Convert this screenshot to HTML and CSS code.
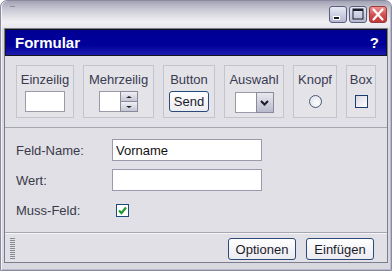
FILE: index.html
```html
<!DOCTYPE html>
<html lang="de">
<head>
    <meta charset="UTF-8">
    <title>Formular</title>
    <link rel="stylesheet" href="styles.css">
</head>
<body>

    <!-- Fenster -->
    <div class="window">

        <!-- Titelleiste -->
        <div class="titlebar">
            <span class="sysmenu"></span>
            <div class="controls">
                <span class="ctl ctl-min">
                    <svg width="16" height="15" viewBox="0 0 16 15"><rect x="3.5" y="9.5" width="6" height="3" fill="#1c1c2c" stroke="#ffffff"/></svg>
                </span>
                <span class="ctl ctl-max">
                    <svg width="16" height="15" viewBox="0 0 16 15"><rect x="3" y="2" width="10" height="10" fill="none" stroke="#1c1c2c" stroke-width="1"/><rect x="3" y="2" width="10" height="2" fill="#1c1c2c"/></svg>
                </span>
                <span class="ctl ctl-close">
                    <svg width="16" height="15" viewBox="0 0 16 15"><path d="M3.5 2.5 L12.5 12.5 M12.5 2.5 L3.5 12.5" stroke="#ffffff" stroke-width="2.2" stroke-linecap="round"/></svg>
                </span>
            </div>
        </div>

        <!-- Inhalt -->
        <div class="panel">
            <div class="header">
                <span class="header-title">Formular</span>
                <span class="header-help">?</span>
            </div>

            <!-- Werkzeugleiste -->
            <div class="toolbar">
                <div class="tool tool-text">
                    <span class="tool-label">Einzeilig</span>
                    <span class="field"></span>
                </div>
                <div class="tool tool-area">
                    <span class="tool-label">Mehrzeilig</span>
                    <span class="spinner">
                        <span class="spinner-field"></span>
                        <span class="spinner-btns">
                            <span class="spin-btn"><i class="arrow-up"></i></span>
                            <span class="spin-btn"><i class="arrow-down"></i></span>
                        </span>
                    </span>
                </div>
                <div class="tool tool-button">
                    <span class="tool-label">Button</span>
                    <span class="send-btn">Send</span>
                </div>
                <div class="tool tool-select">
                    <span class="tool-label">Auswahl</span>
                    <span class="combo">
                        <span class="combo-field"></span>
                        <span class="combo-btn">
                            <svg width="9" height="6" viewBox="0 0 9 6"><path d="M1 1 L4.5 4.5 L8 1" fill="none" stroke="#1a1a2a" stroke-width="2"/></svg>
                        </span>
                    </span>
                </div>
                <div class="tool tool-radio">
                    <span class="tool-label">Knopf</span>
                    <span class="radio"></span>
                </div>
                <div class="tool tool-check">
                    <span class="tool-label">Box</span>
                    <span class="checkbox"></span>
                </div>
            </div>

            <!-- Formularfelder -->
            <div class="form">
                <div class="row">
                    <label class="row-label">Feld-Name:</label>
                    <input class="row-input" type="text" value="Vorname">
                </div>
                <div class="row">
                    <label class="row-label">Wert:</label>
                    <input class="row-input" type="text" value="">
                </div>
                <div class="row">
                    <label class="row-label">Muss-Feld:</label>
                    <span class="check-on">
                        <svg width="11" height="11" viewBox="0 0 11 11"><path d="M2 5.5 L4.5 8 L9 2.5" fill="none" stroke="#1f9a2a" stroke-width="2.2"/></svg>
                    </span>
                </div>
            </div>

            <!-- Fußleiste -->
            <div class="footer">
                <span class="grip"></span>
                <div class="footer-buttons">
                    <button class="btn">Optionen</button>
                    <button class="btn">Einfügen</button>
                </div>
            </div>
        </div>
    </div>

</body>
</html>
```

FILE: styles.css
```css
/* Grundstil */
body {
    margin: 0;
    padding: 0;
    background-color: #ffffff;
    font-family: 'Liberation Sans', Arial, sans-serif;
    font-size: 13px;
    color: #333344;
}

/* Fenster */
.window {
    width: 392px;
    height: 271px;
    box-sizing: border-box;
    border: 1px solid #8a8aa0;
    border-radius: 7px 7px 0 0;
    padding: 0 3px 7px;
    background: linear-gradient(#a2a2b4 0, #c8c8d4 8px, #f0f0f4 21px, #e6e6ec 27px, #d8d8e0 28px);
    box-shadow: inset 1px 0 #f4f4f8, inset -1px 0 #b8b8c6, inset 0 -1px #b8b8c6;
}

.titlebar {
    height: 27px;
    position: relative;
    display: flex;
    justify-content: flex-end;
    padding: 5px 1px 0 0;
    box-sizing: border-box;
}

.sysmenu {
    position: absolute;
    left: 6px;
    top: 5px;
    width: 5px;
    height: 1px;
    background-color: #8c8c9c;
}

.controls {
    display: flex;
    gap: 2px;
}

.ctl {
    width: 18px;
    height: 17px;
    box-sizing: border-box;
    border: 1px solid #5c5c7c;
    border-radius: 3px;
    background: linear-gradient(#e8eaf4, #b4b8d0);
    display: flex;
    align-items: center;
    justify-content: center;
}

.ctl-close {
    border-color: #9a3a3a;
    background: linear-gradient(#f09090, #d04848 60%, #c03838);
}

/* Innerer Bereich */
.panel {
    border: 1px solid #7c7c8c;
    background-color: #e0e0e6;
}

.header {
    height: 27px;
    box-sizing: border-box;
    border: 1px solid #14141e;
    background: linear-gradient(#000094, #00009a 60%, #1c1cae);
    display: flex;
    align-items: center;
    justify-content: space-between;
    padding: 0 7px 0 9px;
    color: #ffffff;
    font-size: 15px;
    font-weight: bold;
}

/* Werkzeugleiste */
.toolbar {
    display: flex;
    gap: 9px;
    padding: 9px 11px;
    border-bottom: 1px solid #a6a6b0;
}

.tool {
    height: 53px;
    box-sizing: border-box;
    border: 1px solid #c4c4cc;
    background-color: #e3e3e8;
    padding-top: 6px;
    display: flex;
    flex-direction: column;
    align-items: center;
}

.tool-text { width: 58px; }
.tool-area { width: 71px; }
.tool-button { width: 52px; }
.tool-select { width: 60px; }
.tool-radio { width: 44px; }
.tool-check { width: 30px; }

.tool-label {
    line-height: 16px;
    color: #3a3a50;
    margin-bottom: 3px;
}

.field {
    width: 40px;
    height: 21px;
    box-sizing: border-box;
    border: 1px solid #9a9aaa;
    background-color: #ffffff;
}

/* Spinner */
.spinner {
    display: flex;
    height: 21px;
}

.spinner-field {
    width: 21px;
    box-sizing: border-box;
    border: 1px solid #9a9aaa;
    border-right: none;
    background-color: #ffffff;
}

.spinner-btns {
    display: flex;
    flex-direction: column;
    width: 18px;
}

.spin-btn {
    flex: 1;
    box-sizing: border-box;
    border: 1px solid #8a8a9c;
    background: linear-gradient(#f0f0f4, #c4c6d4);
    display: flex;
    align-items: center;
    justify-content: center;
}

.spin-btn + .spin-btn {
    border-top: none;
}

.arrow-up,
.arrow-down {
    width: 0;
    height: 0;
    border-left: 3px solid transparent;
    border-right: 3px solid transparent;
}

.arrow-up { border-bottom: 2px solid #20202c; }
.arrow-down { border-top: 2px solid #20202c; }

/* Send-Knopf */
.send-btn {
    width: 40px;
    height: 21px;
    box-sizing: border-box;
    border: 1px solid #2a4a7c;
    border-radius: 3px;
    background: linear-gradient(#ffffff, #ececf2);
    color: #1a1a2a;
    text-align: center;
    line-height: 19px;
}

/* Auswahl */
.combo {
    display: flex;
    height: 21px;
    margin-top: 1px;
}

.combo-field {
    width: 21px;
    box-sizing: border-box;
    border: 1px solid #9a9aaa;
    border-right: none;
    background-color: #ffffff;
}

.combo-btn {
    width: 18px;
    box-sizing: border-box;
    border: 1px solid #8a8a9c;
    background: linear-gradient(#e8e8f0, #b8bacc);
    display: flex;
    align-items: center;
    justify-content: center;
}

.radio {
    width: 13px;
    height: 13px;
    box-sizing: border-box;
    border: 1px solid #4a5a78;
    border-radius: 50%;
    background: radial-gradient(circle at 60% 60%, #ffffff, #d6dae4);
    margin-top: 4px;
}

.checkbox {
    width: 13px;
    height: 13px;
    box-sizing: border-box;
    border: 1px solid #1c3c70;
    background: linear-gradient(135deg, #d8d8e2, #ffffff);
    margin-top: 4px;
}

/* Formular */
.form {
    display: flex;
    flex-direction: column;
    gap: 8px;
    padding: 11px 11px;
}

.row {
    display: flex;
    align-items: center;
    height: 22px;
}

.row-label {
    width: 96px;
    color: #3a3a48;
}

.row-input {
    width: 150px;
    height: 22px;
    box-sizing: border-box;
    margin: 0;
    border: 1px solid #9a9aaa;
    padding: 0 3px;
    font-family: inherit;
    font-size: 13px;
    color: #111111;
    background-color: #ffffff;
    outline: none;
}

.check-on {
    width: 13px;
    height: 13px;
    box-sizing: border-box;
    border: 1px solid #1c4a7a;
    background-color: #ffffff;
    margin-left: 4px;
    display: flex;
    align-items: center;
    justify-content: center;
}

/* Fußleiste */
.footer {
    display: flex;
    align-items: center;
    justify-content: space-between;
    height: 30px;
    box-sizing: border-box;
    padding: 3px 13px 0 5px;
    border-top: 1px solid #a6a6b0;
    box-shadow: inset 0 1px #f6f6f8;
}

.grip {
    width: 5px;
    height: 22px;
    background: repeating-linear-gradient(#8a8a94 0 1px, transparent 1px 2px);
}

.footer-buttons {
    display: flex;
    gap: 10px;
}

.btn {
    width: 68px;
    height: 22px;
    box-sizing: border-box;
    border: 1px solid #2a4a7c;
    border-radius: 3px;
    background: linear-gradient(#ffffff, #ebebf0);
    font-family: inherit;
    font-size: 13px;
    color: #1a1a2a;
    padding: 0;
}
```
